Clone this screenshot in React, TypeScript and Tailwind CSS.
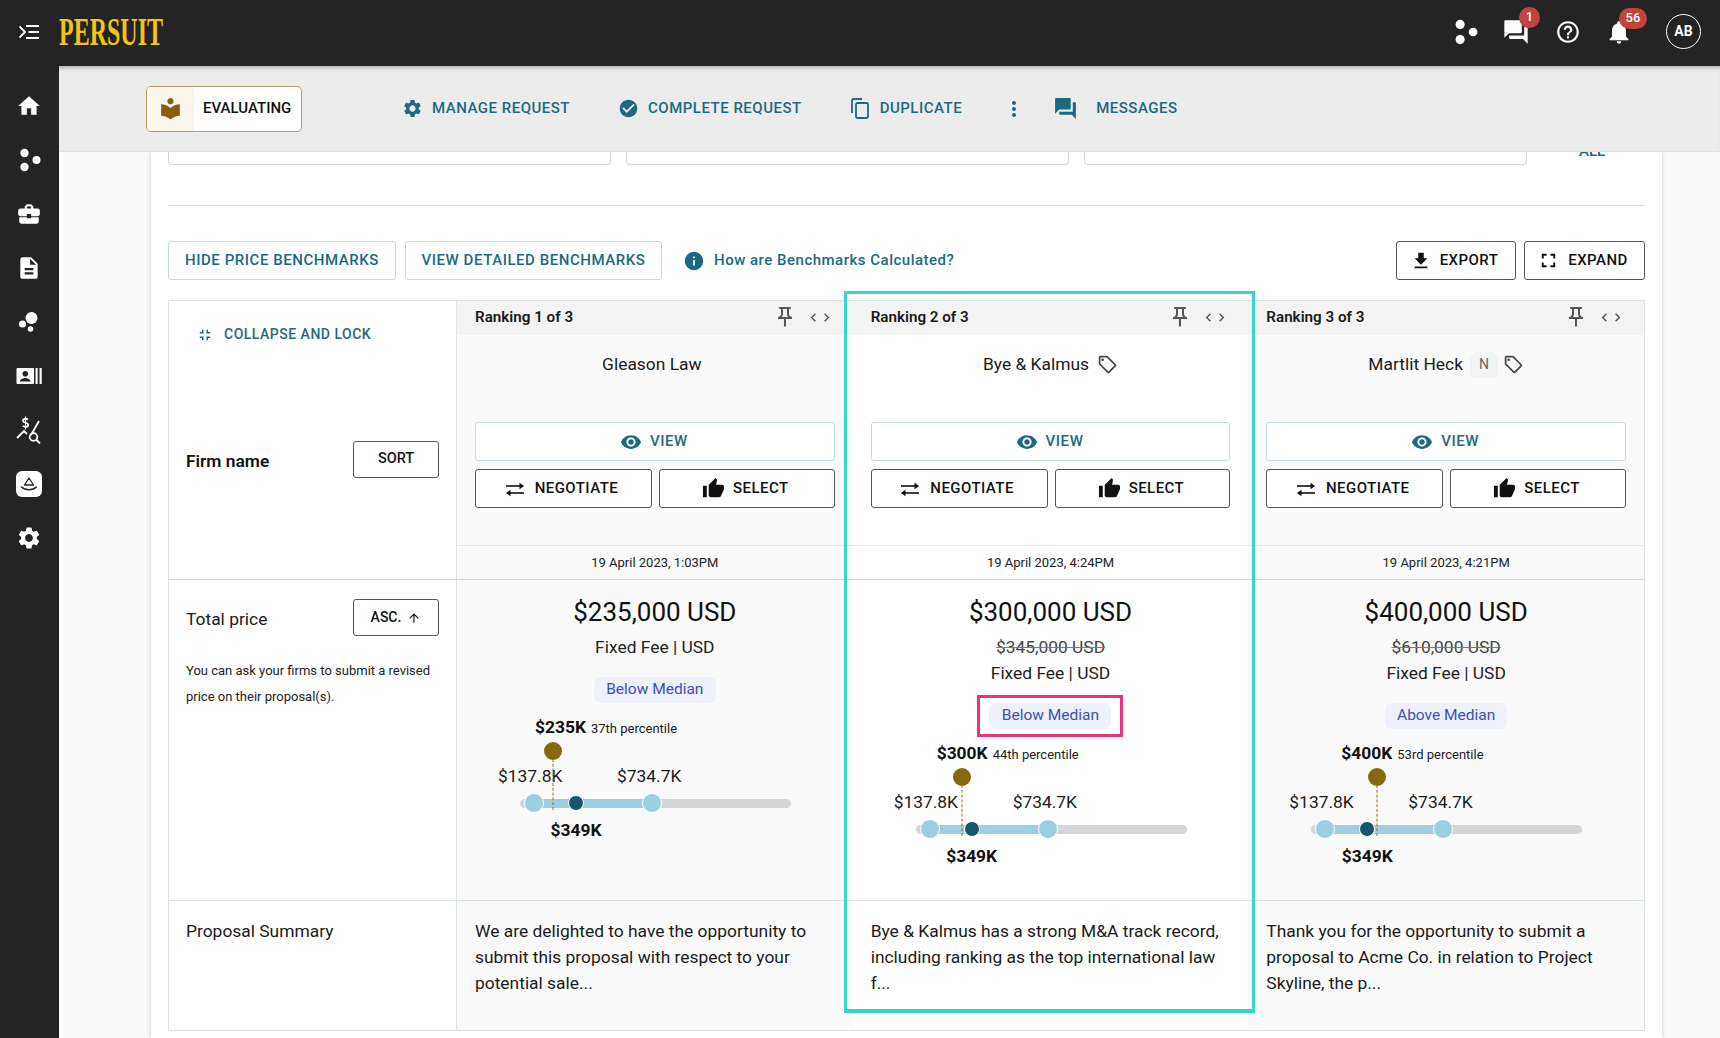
import type { ReactNode } from 'react';
import {
  MdArrowUpward,
  MdBusinessCenter,
  MdCheckCircle,
  MdChevronLeft,
  MdChevronRight,
  MdDescription,
  MdFileDownload,
  MdForum,
  MdFullscreen,
  MdFullscreenExit,
  MdHelpOutline,
  MdHome,
  MdInfo,
  MdLocalLibrary,
  MdMoreVert,
  MdNotifications,
  MdOutlineLocalOffer,
  MdOutlinePushPin,
  MdSettings,
  MdThumbUp,
  MdVisibility,
} from 'react-icons/md';

function DotsIcon({ size = 24 }: { size?: number }) {
  return (
    <svg width={size} height={size} viewBox="0 0 24 24" fill="white">
      <circle cx="7.5" cy="5" r="4.2" />
      <circle cx="19.5" cy="12" r="4" />
      <circle cx="7.5" cy="19" r="4.2" />
    </svg>
  );
}

function BubblesIcon() {
  return (
    <svg width="24" height="24" viewBox="0 0 24 24" fill="white">
      <circle cx="14.5" cy="8" r="6" />
      <circle cx="5.5" cy="14" r="3.6" />
      <circle cx="13.5" cy="19" r="2.8" />
    </svg>
  );
}

function ContactBarsIcon() {
  return (
    <svg width="26" height="20" viewBox="0 0 26 20" fill="white">
      <path fillRule="evenodd" d="M1.5 2h15.5a1 1 0 0 1 1 1v14a1 1 0 0 1-1 1H1.500a1 1 0 0 1-1-1V3a1 1 0 0 1 1-1ZM9.300 5a2.800 2.800 0 1 0 0 5.600 2.800 2.800 0 0 0 0-5.600ZM4 15.500h10.500c0-2.200-3.200-3.400-5.200-3.400S4 13.300 4 15.500Z" />
      <rect x="19.500" y="2" width="2.200" height="16" />
      <rect x="23.500" y="2" width="2.200" height="16" />
    </svg>
  );
}

function PriceSearchIcon() {
  return (
    <svg width="26" height="28" viewBox="0 0 26 28" fill="none" stroke="white" strokeWidth="1.800">
      <path d="M12 3.500c-1-1-5-1.200-5 1.200 0 2.600 5.200 1.500 5.200 4.200 0 2.400-4.200 2.200-5.400 1" />
      <path d="M9.500 0.500v13" strokeWidth="1.200" />
      <path d="M23 5 15 19" />
      <path d="M1 22l7-7 3 3" />
      <circle cx="17.500" cy="21" r="3.800" />
      <path d="m20.500 24 3.500 3.500" />
    </svg>
  );
}

function TentBadgeIcon() {
  return (
    <div className="flex h-[26px] w-[26px] items-center justify-center rounded-md bg-white">
      <svg width="18" height="16" viewBox="0 0 18 16" fill="none" stroke="#242424" strokeWidth="1.300">
        <path d="M4.500 9 9 2l4.500 7Z" strokeLinejoin="round" />
        <path d="M1.500 11C5 14.500 13 14.500 16.500 11" strokeLinecap="round" strokeWidth="1.500" />
      </svg>
    </div>
  );
}

function NegotiateIcon() {
  return (
    <svg width="20" height="16" viewBox="0 0 20 16" fill="none" stroke="currentColor" strokeWidth="1.600">
      <path d="M1 5h17" />
      <path d="M14.500 1.800v6.400L19 5Z" fill="currentColor" stroke="none" />
      <path d="M2 12h17" />
      <path d="M5.500 8.800v6.400L1 12Z" fill="currentColor" stroke="none" />
    </svg>
  );
}

function MenuToggleIcon() {
  return (
    <svg width="20" height="14" viewBox="0 0 20 14" fill="none" stroke="white" strokeWidth="1.800">
      <path d="M7 1h13M9.500 7H20M7 13h13" />
      <path d="M0.500 1.500 6 7l-5.500 5.500" />
    </svg>
  );
}

function DuplicateIcon() {
  return (
    <svg width="18" height="21" viewBox="0 0 18 21" fill="none" stroke="currentColor" strokeWidth="1.800">
      <path d="M1 15V2.500A1.500 1.500 0 0 1 2.500 1H11" />
      <rect x="5" y="5" width="12" height="15" rx="1.500" />
    </svg>
  );
}

function NavAction({ icon, label, gap = 'gap-[9px]' }: { icon: ReactNode; label: string; gap?: string }) {
  return (
    <a href="#" className={`flex items-center ${gap} text-[15px] font-medium tracking-[0.5px] text-[#1c6a80]`}>
      {icon}
      <span>{label}</span>
    </a>
  );
}

function TealButton({ children, className = '' }: { children: ReactNode; className?: string }) {
  return (
    <button className={`flex h-[39px] items-center justify-center rounded-[3px] border border-[#c7dae3] bg-white text-[15px] font-medium tracking-[0.55px] text-[#1c6a80] ${className}`}>
      {children}
    </button>
  );
}

function DarkButton({ children, className = '' }: { children: ReactNode; className?: string }) {
  return (
    <button className={`flex h-[39px] items-center justify-center rounded-[3px] border border-[#555] bg-white text-[15px] font-medium tracking-[0.45px] text-[#111] ${className}`}>
      {children}
    </button>
  );
}

type Firm = {
  rank: number;
  name: string;
  date: string;
  price: string;
  was?: string;
  median: string;
  shortPrice: string;
  percentile: string;
  markerX: number;
  labelX: number;
  highlighted?: boolean;
  newFirm?: boolean;
  tag?: boolean;
  summary: string;
};

const firms: Firm[] = [
  {
    rank: 1,
    name: 'Gleason Law',
    date: '19 April 2023, 1:03PM',
    price: '$235,000 USD',
    median: 'Below Median',
    shortPrice: '$235K',
    percentile: '37th percentile',
    markerX: 96,
    labelX: 78,
    summary: 'We are delighted to have the opportunity to submit this proposal with respect to your potential sale...',
  },
  {
    rank: 2,
    name: 'Bye & Kalmus',
    date: '19 April 2023, 4:24PM',
    price: '$300,000 USD',
    was: '$345,000 USD',
    median: 'Below Median',
    shortPrice: '$300K',
    percentile: '44th percentile',
    markerX: 109,
    labelX: 84,
    highlighted: true,
    tag: true,
    summary: 'Bye & Kalmus has a strong M&A track record, including ranking as the top international law f...',
  },
  {
    rank: 3,
    name: 'Martlit Heck',
    date: '19 April 2023, 4:21PM',
    price: '$400,000 USD',
    was: '$610,000 USD',
    median: 'Above Median',
    shortPrice: '$400K',
    percentile: '53rd percentile',
    markerX: 129,
    labelX: 93,
    newFirm: true,
    tag: true,
    summary: 'Thank you for the opportunity to submit a proposal to Acme Co. in relation to Project Skyline, the p...',
  },
];

function cellBg(firm: Firm) {
  return firm.highlighted ? 'bg-white' : 'bg-[#fafafa]';
}

function BenchmarkChart({ firm }: { firm: Firm }) {
  return (
    <div className="relative h-[150px] w-full text-[17.400px] leading-[24px] text-[#1a1a1a]">
      <div className="absolute top-[12px] flex items-baseline gap-[5px] whitespace-nowrap" style={{ left: firm.labelX }}>
        <span className="font-bold text-[#111]">{firm.shortPrice}</span>
        <span className="text-[13px]">{firm.percentile}</span>
      </div>
      <div className="absolute top-[39px] h-[18px] w-[18px] -translate-x-1/2 rounded-full bg-[#86690c]" style={{ left: firm.markerX }} />
      <div className="absolute left-[41px] top-[61px] w-[64px] text-center">$137.8K</div>
      <div className="absolute left-[160px] top-[61px] w-[64px] text-center">$734.7K</div>
      <div className="absolute left-[63px] top-[96px] h-[9px] w-[271px] rounded-full bg-[#d6d6d9]" />
      <div className="absolute left-[77px] top-[96px] h-[9px] w-[118px] bg-[#9bd0e0]" />
      <div className="absolute top-[56px] h-[51px] -translate-x-1/2 border-l-[1.500px] border-dashed border-[#8f7424]" style={{ left: firm.markerX }} />
      <div className="absolute left-[67px] top-[90px] h-[20px] w-[20px] rounded-full border border-white bg-[#9bd0e0]" />
      <div className="absolute left-[185px] top-[90px] h-[20px] w-[20px] rounded-full border border-white bg-[#9bd0e0]" />
      <div className="absolute left-[111px] top-[92px] h-[16px] w-[16px] rounded-full border border-white bg-[#17566c]" />
      <div className="absolute left-[89px] top-[115px] w-[60px] text-center font-bold text-[#111]">$349K</div>
    </div>
  );
}

function PriceCell({ firm }: { firm: Firm }) {
  return (
    <div className={`flex flex-col items-center pt-[14px] ${cellBg(firm)}`}>
      <div className="text-[26px] leading-[36px] text-[#111]">{firm.price}</div>
      <div className="mt-[4px] flex flex-col items-center text-[17.400px] leading-[26px] text-[#222]">
        {firm.was && <span className="text-[#444] line-through decoration-[#d9534f]">{firm.was}</span>}
        <span>Fixed Fee | USD</span>
      </div>
      <div className="relative mt-[17px] flex h-[26px] w-[122px] items-center justify-center rounded-[7px] bg-[#eef0fb] text-[15.500px] text-[#3d4fb8]">
        {firm.median}
        {firm.highlighted && <div className="absolute -inset-x-[12px] -inset-y-[8px] border-[3px] border-[#f0317f]" />}
      </div>
      <BenchmarkChart firm={firm} />
    </div>
  );
}

function FirmCell({ firm }: { firm: Firm }) {
  return (
    <div className={`flex flex-col ${cellBg(firm)}`}>
      <div className="flex h-[34px] items-center justify-between bg-[#f3f3f3] pb-[2px] pl-[18px] pr-[18px]">
        <span className="text-[15.200px] font-semibold text-[#1a1a1a]">Ranking {firm.rank} of 3</span>
        <div className="flex items-center gap-[8px] text-[#555]">
          <MdOutlinePushPin size={24} />
          <div className="flex -space-x-[4px]">
            <MdChevronLeft size={17} />
            <MdChevronRight size={17} />
          </div>
        </div>
      </div>
      <div className={`flex h-[56px] items-center justify-center gap-[8px] pt-[3px] text-[17.400px] text-[#1a1a1a] ${firm.tag ? '' : 'pr-[6px]'}`}>
        <span>{firm.name}</span>
        {firm.newFirm && (
          <span className="-mr-[3px] -ml-[1px] flex h-[26px] w-[28px] items-center justify-center rounded-[6px] bg-[#f2f3f3] text-[14px] text-[#666]">N</span>
        )}
        {firm.tag && <MdOutlineLocalOffer size={21} className="text-[#444]" />}
      </div>
      <div className="flex flex-col gap-[8px] px-[18px] pt-[31px]">
        <TealButton className="w-full gap-[8px] pr-[2px]">
          <MdVisibility size={22} />
          VIEW
        </TealButton>
        <div className="flex gap-[7px]">
          <DarkButton className="flex-1 gap-[10px] pr-[4px]">
            <NegotiateIcon />
            NEGOTIATE
          </DarkButton>
          <DarkButton className="flex-1 gap-[8px] pr-[3px]">
            <MdThumbUp size={23} />
            SELECT
          </DarkButton>
        </div>
      </div>
    </div>
  );
}

export default function App() {
  return (
    <div className="flex h-screen flex-col overflow-hidden bg-[#fafafa] [font-family:Roboto,sans-serif]">
      <header className="flex h-[66px] shrink-0 items-center bg-[#242424] pb-[3px] pl-[19px] pr-[19px]">
        <MenuToggleIcon />
        <div className="ml-[20px] w-[105px]">
          <span className="inline-block origin-left scale-x-[0.6] whitespace-nowrap text-[40px] font-bold leading-none text-[#f1c419] [font-family:'Liberation_Serif',serif]">
            PERSUIT
          </span>
        </div>
        <div className="ml-auto flex items-center">
          <DotsIcon size={26} />
          <div className="relative ml-[24px]">
            <MdForum size={28} className="text-white" />
            <span className="absolute -right-[10px] -top-[11px] flex h-[21px] w-[21px] items-center justify-center rounded-full bg-[#c0443c] text-[13px] font-medium text-white">1</span>
          </div>
          <MdHelpOutline size={26} className="ml-[25px] text-white" />
          <div className="relative ml-[24px]">
            <MdNotifications size={28} className="text-white" />
            <span className="absolute -right-[14px] -top-[10px] flex h-[21px] w-[28px] items-center justify-center rounded-full bg-[#c0443c] text-[13px] font-medium text-white">56</span>
          </div>
          <div className="ml-[33px] flex h-[35px] w-[35px] items-center justify-center rounded-full border-[1.500px] border-white text-[14px] font-bold text-white">AB</div>
        </div>
      </header>

      <div className="flex min-h-0 flex-1">
        <aside className="flex w-[59px] shrink-0 flex-col items-center bg-[#242424] pr-[2px] pt-[13px] text-white">
          <div className="flex h-[54px] items-center"><MdHome size={26} /></div>
          <div className="flex h-[54px] items-center"><DotsIcon /></div>
          <div className="flex h-[54px] items-center"><MdBusinessCenter size={26} /></div>
          <div className="flex h-[54px] items-center"><MdDescription size={26} /></div>
          <div className="flex h-[54px] items-center"><BubblesIcon /></div>
          <div className="flex h-[54px] items-center"><ContactBarsIcon /></div>
          <div className="flex h-[54px] items-center"><PriceSearchIcon /></div>
          <div className="flex h-[54px] items-center"><TentBadgeIcon /></div>
          <div className="flex h-[54px] items-center"><MdSettings size={26} /></div>
        </aside>

        <main className="flex min-w-0 flex-1 flex-col">
          <div className="z-10 flex h-[86px] shrink-0 items-center border-b border-[#e2e2e2] bg-[#ececec] pl-[87px] shadow-[inset_0_5px_5px_-4px_rgba(0,0,0,0.35)]">
            <div className="flex h-[46px] w-[156px] overflow-hidden rounded-[5px] border border-[#b89a66] bg-white">
              <div className="flex w-[47px] items-center justify-center bg-[#faf6ec]">
                <MdLocalLibrary size={25} className="text-[#8a5d14]" />
              </div>
              <div className="flex flex-1 items-center pl-[9px] text-[15px] font-medium text-[#111]">EVALUATING</div>
            </div>
            <div className="ml-[100px]">
              <NavAction icon={<MdSettings size={21} />} label="MANAGE REQUEST" />
            </div>
            <div className="ml-[48px]">
              <NavAction icon={<MdCheckCircle size={21} />} label="COMPLETE REQUEST" />
            </div>
            <div className="ml-[49px]">
              <NavAction icon={<DuplicateIcon />} label="DUPLICATE" gap="gap-[11px]" />
            </div>
            <MdMoreVert size={24} className="ml-[40px] text-[#1c6a80]" />
            <div className="ml-[27px]">
              <NavAction icon={<MdForum size={25} />} label="MESSAGES" gap="gap-[18px]" />
            </div>
          </div>

          <div className="min-h-0 flex-1 overflow-hidden pl-[92px] pr-[58px]">
            <div className="h-full bg-white px-[17px] shadow-[0_0_4px_rgba(0,0,0,0.18)]">
              <div className="flex h-[13px] gap-[15px]">
                <div className="w-[443px] rounded-b-[4px] border border-t-0 border-[#d6d6d6]" />
                <div className="w-[443px] rounded-b-[4px] border border-t-0 border-[#d6d6d6]" />
                <div className="w-[443px] rounded-b-[4px] border border-t-0 border-[#d6d6d6]" />
                <div className="ml-[37px] flex h-[5px] items-end overflow-hidden text-[15px] font-medium leading-[12px] text-[#1c6a80]">ALL</div>
              </div>
              <div className="mt-[40px] border-t border-[#dcdcdc]" />

              <div className="mt-[35px] flex items-center">
                <TealButton className="w-[228px]">HIDE PRICE BENCHMARKS</TealButton>
                <TealButton className="ml-[9px] w-[257px]">VIEW DETAILED BENCHMARKS</TealButton>
                <MdInfo size={22} className="ml-[21px] text-[#1c6a80]" />
                <a href="#" className="ml-[9px] text-[15px] font-medium tracking-[0.5px] text-[#1c6a80]">How are Benchmarks Calculated?</a>
                <DarkButton className="ml-auto w-[120px] gap-[8px] pr-[4px]">
                  <MdFileDownload size={22} />
                  EXPORT
                </DarkButton>
                <DarkButton className="ml-[8px] w-[121px] gap-[8px] pr-[4px]">
                  <MdFullscreen size={23} />
                  EXPAND
                </DarkButton>
              </div>

              <div className="relative mt-[20px] border-x border-t border-[#dbe3e3]">
                <div className="grid h-[244px] grid-cols-[288px_repeat(3,1fr)]">
                  <div className="flex flex-col border-r border-[#dbe3e3] px-[17px]">
                    <div className="mt-[23px] flex items-center gap-[10px] pl-[10px] text-[14px] font-medium tracking-[0.5px] text-[#1c6a80]">
                      <MdFullscreenExit size={18} />
                      COLLAPSE AND LOCK
                    </div>
                    <div className="mt-[96px] flex items-center justify-between">
                      <span className="pt-[4px] text-[17.400px] font-semibold text-[#111]">Firm name</span>
                      <button className="flex h-[37px] w-[86px] items-center justify-center rounded-[3px] border border-[#555] bg-white pb-[1px] text-[14.500px] font-medium text-[#111]">SORT</button>
                    </div>
                  </div>
                  {firms.map((firm) => (
                    <FirmCell key={firm.rank} firm={firm} />
                  ))}
                </div>

                <div className="grid h-[34px] grid-cols-[288px_repeat(3,1fr)]">
                  <div className="border-r border-[#dbe3e3] bg-white" />
                  {firms.map((firm) => (
                    <div key={firm.rank} className={`flex items-center justify-center border-t border-[#e6e8e8] text-[13px] text-[#222] ${cellBg(firm)}`}>
                      {firm.date}
                    </div>
                  ))}
                </div>

                <div className="grid h-[321px] grid-cols-[288px_repeat(3,1fr)] border-t border-[#cfd9d9]">
                  <div className="border-r border-[#dbe3e3] px-[17px] pt-[19px]">
                    <div className="flex items-center justify-between">
                      <span className="pt-[3px] text-[17.400px] text-[#1a1a1a]">Total price</span>
                      <button className="flex h-[37px] w-[86px] items-center justify-center gap-[6px] rounded-[3px] border border-[#555] bg-white text-[14px] font-medium text-[#111]">
                        ASC.
                        <MdArrowUpward size={14} />
                      </button>
                    </div>
                    <p className="mt-[22px] text-[13px] leading-[26px] text-[#222]">
                      You can ask your firms to submit a revised price on their proposal(s).
                    </p>
                  </div>
                  {firms.map((firm) => (
                    <PriceCell key={firm.rank} firm={firm} />
                  ))}
                </div>

                <div className="grid h-[131px] grid-cols-[288px_repeat(3,1fr)] border-y border-[#dbe3e3] text-[17.400px] leading-[26px] text-[#1a1a1a]">
                  <div className="border-r border-[#dbe3e3] px-[17px] pt-[17px]">Proposal Summary</div>
                  {firms.map((firm) => (
                    <div key={firm.rank} className={`pl-[18px] pr-[22px] pt-[17px] ${cellBg(firm)}`}>
                      {firm.summary}
                    </div>
                  ))}
                </div>

                {/* highlight round the second firm */}
                <div className="pointer-events-none absolute -top-[10px] left-[675px] h-[722px] w-[411px] border-[3px] border-b-4 border-[#36d6cd]" />
              </div>
            </div>
          </div>
        </main>
      </div>
    </div>
  );
}
